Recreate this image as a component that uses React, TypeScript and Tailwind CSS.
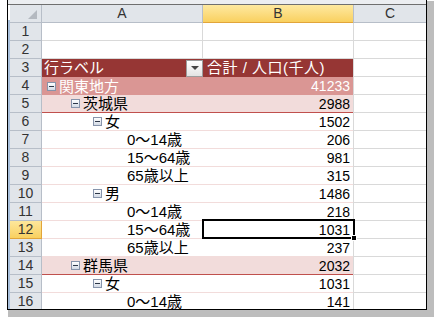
import React from 'react'

type Kind = 'region' | 'pref' | 'sex' | 'age'

interface PivotRow {
  n: number
  label: string
  value: string
  kind: Kind
}

const pivotRows: PivotRow[] = [
  { n: 4, label: '関東地方', value: '41233', kind: 'region' },
  { n: 5, label: '茨城県', value: '2988', kind: 'pref' },
  { n: 6, label: '女', value: '1502', kind: 'sex' },
  { n: 7, label: '0〜14歳', value: '206', kind: 'age' },
  { n: 8, label: '15〜64歳', value: '981', kind: 'age' },
  { n: 9, label: '65歳以上', value: '315', kind: 'age' },
  { n: 10, label: '男', value: '1486', kind: 'sex' },
  { n: 11, label: '0〜14歳', value: '218', kind: 'age' },
  { n: 12, label: '15〜64歳', value: '1031', kind: 'age' },
  { n: 13, label: '65歳以上', value: '237', kind: 'age' },
  { n: 14, label: '群馬県', value: '2032', kind: 'pref' },
  { n: 15, label: '女', value: '1031', kind: 'sex' },
  { n: 16, label: '0〜14歳', value: '141', kind: 'age' },
]

const indent: Record<Kind, string> = {
  region: 'pl-[5px]',
  pref: 'pl-[29px]',
  sex: 'pl-[51px]',
  age: 'pl-[85px]',
}

const fill: Record<Kind, string> = {
  region: 'bg-[#da9694] text-white',
  pref: 'bg-[#f2dcdb] border-b border-[#c0504d] text-black',
  sex: 'bg-white border-b border-[#f2dcdb] text-black',
  age: 'bg-white border-b border-[#f2dcdb] text-black',
}

function MinusBox() {
  return (
    <span className="mr-[3px] inline-flex h-[9px] w-[9px] shrink-0 items-center justify-center border border-[#8794ab] bg-gradient-to-b from-white to-[#d3dae5]">
      <span className="h-px w-[5px] bg-[#2d3748]" />
    </span>
  )
}

function RowHeader({ n }: { n: number }) {
  const active = n === 12
  return (
    <div
      className={`flex items-center justify-center border-b border-r text-[14px] ${
        active
          ? 'border-[#e2a53a] bg-gradient-to-b from-[#fde79b] to-[#f9d05e] text-[#333]'
          : 'border-[#b7bec8] bg-[#e1e5ea] text-[#333]'
      }`}
    >
      {n}
    </div>
  )
}

export default function App() {
  return (
    <div className="h-[319px] w-[436px] overflow-hidden bg-white pl-[7px] font-['Liberation_Sans','Noto_Sans_CJK_JP',sans-serif]">
      <div className="flex h-[310px] w-[420px] flex-col overflow-hidden border-b border-l border-r border-black bg-white shadow-[4px_4px_0_3px_#bdbdbd]">
        {/* top strip of the window */}
        <div className="h-[5px] shrink-0 border-b border-[#6f6f6f] bg-[#eceef1]" />

        <div className="flex min-h-0 flex-1">
          {/* window left edge */}
          <div className="mt-[15px] w-[2px] shrink-0 bg-[#a9c0dc]" />

          <div className="grid grid-cols-[32px_161px_150px_73px] auto-rows-[18px]">
            {/* column headers */}
            <div className="relative border-b border-r border-[#b7bec8] bg-[#e1e5ea]">
              <div className="absolute bottom-[3px] right-[4px] h-0 w-0 border-b-[9px] border-l-[9px] border-b-[#b4b9c0] border-l-transparent" />
            </div>
            <div className="flex items-center justify-center border-b border-r border-[#b7bec8] bg-[#e1e5ea] text-[14px] text-[#333]">
              A
            </div>
            <div className="flex items-center justify-center border-b border-[#e2a53a] bg-gradient-to-b from-[#fee99f] to-[#f9d05e] text-[14px] text-[#333]">
              B
            </div>
            <div className="flex items-center justify-center border-b border-l border-[#b7bec8] bg-[#e1e5ea] text-[14px] text-[#333]">
              C
            </div>

            {/* rows 1 & 2 */}
            {[1, 2].map((n) => (
              <React.Fragment key={n}>
                <RowHeader n={n} />
                <div className="border-b border-r border-[#d9d9d9]" />
                <div className="border-b border-[#d9d9d9]" />
                <div className="border-b border-l border-[#d9d9d9]" />
              </React.Fragment>
            ))}

            {/* row 3: pivot header */}
            <RowHeader n={3} />
            <div className="flex items-center justify-between bg-[#963634] pl-[2px] text-[15px] text-white">
              <span>行ラベル</span>
              <span className="flex h-[17px] w-[17px] items-center justify-center border border-[#9c9c9c] bg-gradient-to-b from-white to-[#e3e3e3]">
                <span className="h-0 w-0 border-l-[4px] border-r-[4px] border-t-[4px] border-l-transparent border-r-transparent border-t-[#444]" />
              </span>
            </div>
            <div className="flex items-center bg-[#963634] pl-[4px] text-[15px] tracking-[0.5px] text-white">
              合計 / 人口(千人)
            </div>
            <div className="border-b border-l border-[#d9d9d9]" />

            {/* pivot body */}
            {pivotRows.map((r) => (
              <React.Fragment key={r.n}>
                <RowHeader n={r.n} />
                <div className={`flex items-center text-[15px] leading-none ${indent[r.kind]} ${fill[r.kind]}`}>
                  {r.kind !== 'age' && <MinusBox />}
                  <span>{r.label}</span>
                </div>
                <div className={`relative flex items-center justify-end pr-[3px] text-[14px] leading-none ${fill[r.kind]}`}>
                  {r.value}
                  {r.n === 12 && (
                    <div className="absolute bottom-[-1px] left-[-1px] right-[-2px] top-[-2px] z-10 border-2 border-black">
                      <div className="absolute bottom-[-4px] right-[-4px] h-[6px] w-[6px] border border-white bg-black" />
                    </div>
                  )}
                </div>
                <div className="border-b border-l border-[#d9d9d9]" />
              </React.Fragment>
            ))}
          </div>
        </div>
      </div>
    </div>
  )
}
